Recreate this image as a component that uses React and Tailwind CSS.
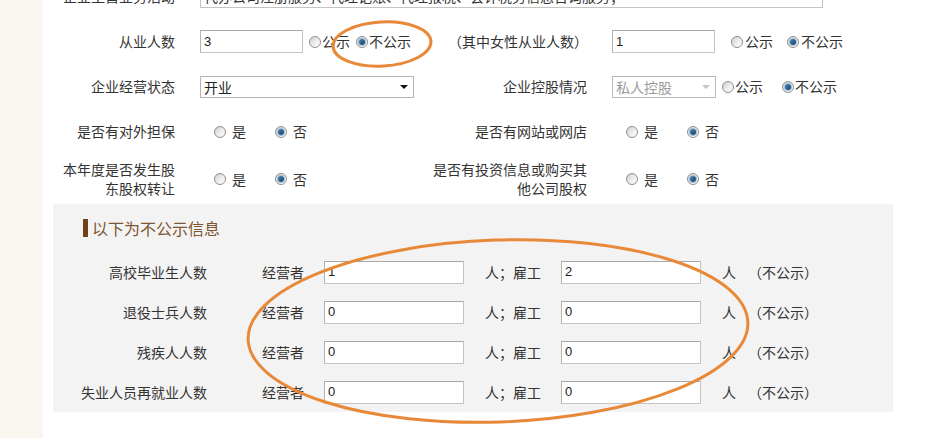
import React from "react";

const FONT = "font-['Noto_Sans_CJK_SC','Noto_Sans',sans-serif]";

const Radio = ({ checked }) => (
  <span className="inline-flex items-center justify-center w-[12px] h-[12px] shrink-0 rounded-full border border-[#8f8f8f] bg-gradient-to-br from-[#cfcfcf] via-[#ececec] to-[#ffffff]">
    {checked && (
      <span className="block w-[6px] h-[6px] rounded-full bg-gradient-to-br from-[#4d86b8] to-[#123f68] shadow-[0_0_0_1px_#9fc0dc]" />
    )}
  </span>
);

const Opt = ({ checked, label, gap = "ml-[1px]", className = "" }) => (
  <span className={`inline-flex items-center ${className}`}>
    <Radio checked={checked} />
    <span className={gap}>{label}</span>
  </span>
);

const TextBox = ({ value, w, h = "h-[23px]" }) => (
  <div
    className={`${w} ${h} shrink-0 flex items-center bg-white border border-[#c4c4c4] border-t-[#a8a8a8] border-l-[#b4b4b4] px-[3px] text-[13px] font-['Liberation_Sans',sans-serif] text-[#222]`}
  >
    {value}
  </div>
);

const Select = ({ value, w, disabled }) => (
  <div
    className={`${w} h-[22px] shrink-0 flex items-center justify-between border ${
      disabled ? "border-[#b9b9b9] text-[#9a9a9a]" : "border-[#b4b4b4] text-[#222]"
    } bg-white pl-[3px] pr-[5px] text-[14px] leading-none`}
  >
    <span>{value}</span>
    <span
      className={`block w-0 h-0 border-l-[4px] border-r-[4px] border-t-[4px] border-l-transparent border-r-transparent ${
        disabled ? "border-t-[#c4c4c4]" : "border-t-[#111]"
      }`}
    />
  </div>
);

const Row = ({ h, left, leftLabel, right, rightLabel }) => (
  <div className={`flex items-center ${h}`}>
    <div className="w-[387px] shrink-0 flex items-center">
      <div className="w-[132px] shrink-0 text-right leading-[19px]">{leftLabel}</div>
      <div className="ml-[25px] flex items-center">{left}</div>
    </div>
    {rightLabel !== undefined && (
      <div className="flex items-center">
        <div className="w-[157px] shrink-0 text-right leading-[19px]">{rightLabel}</div>
        <div className="ml-[25px] flex items-center">{right}</div>
      </div>
    )}
  </div>
);

const HiddenRow = ({ label, a, b }) => (
  <div className="flex items-center h-[40px]">
    <div className="w-[154px] shrink-0 text-right">{label}</div>
    <div className="ml-[55px] w-[62px] shrink-0">经营者</div>
    <TextBox value={a} w="w-[140px]" />
    <div className="w-[97px] shrink-0 pl-[21px]">人；雇工</div>
    <TextBox value={b} w="w-[140px]" />
    <div className="w-[47px] shrink-0 pl-[21px]">人</div>
    <div>（不公示）</div>
  </div>
);

export default function App() {
  return (
    <div className={`relative flex w-[948px] h-[438px] overflow-hidden bg-white text-[14px] text-[#333] ${FONT}`}>
      <div className="w-[43px] shrink-0 bg-[#f8f6ee]" />

      <div className="flex-1">
        <div className="-mt-[27px]">
          <Row
            h="h-[46px]"
            leftLabel="企业主营业务活动"
            left={
              <div className="w-[623px] h-[23px] flex items-center border border-[#c4c4c4] bg-white px-[3px] whitespace-nowrap overflow-hidden">
                代办公司注册服务、代理记账、代理报税、会计税务信息咨询服务；
              </div>
            }
          />
          <Row
            h="h-[45px]"
            leftLabel="从业人数"
            left={
              <>
                <TextBox value="3" w="w-[103px]" />
                <Opt className="ml-[6px]" label="公示" />
                <Opt className="ml-[6px]" checked label="不公示" />
              </>
            }
            rightLabel={<span className="relative left-[1px]">（其中女性从业人数）</span>}
            right={
              <>
                <TextBox value="1" w="w-[103px]" />
                <Opt className="ml-[16px]" gap="ml-[2px]" label="公示" />
                <Opt className="ml-[14px]" gap="ml-[2px]" checked label="不公示" />
              </>
            }
          />
          <Row
            h="h-[45px]"
            leftLabel="企业经营状态"
            left={<Select value="开业" w="w-[214px]" />}
            rightLabel="企业控股情况"
            right={
              <>
                <Select value="私人控股" w="w-[104px]" disabled />
                <Opt className="ml-[6px]" label="公示" />
                <Opt className="ml-[19px]" checked label="不公示" />
              </>
            }
          />
          <Row
            h="h-[45px]"
            leftLabel="是否有对外担保"
            left={
              <>
                <Opt className="ml-[14px]" gap="ml-[6px]" label="是" />
                <Opt className="ml-[29px]" gap="ml-[6px]" checked label="否" />
              </>
            }
            rightLabel="是否有网站或网店"
            right={
              <>
                <Opt className="ml-[14px]" gap="ml-[6px]" label="是" />
                <Opt className="ml-[29px]" gap="ml-[6px]" checked label="否" />
              </>
            }
          />
          <Row
            h="h-[50px]"
            leftLabel={
              <>
                本年度是否发生股
                <br />
                东股权转让
              </>
            }
            left={
              <>
                <Opt className="ml-[14px]" gap="ml-[6px]" label="是" />
                <Opt className="ml-[29px]" gap="ml-[6px]" checked label="否" />
              </>
            }
            rightLabel={
              <>
                是否有投资信息或购买其
                <br />
                他公司股权
              </>
            }
            right={
              <>
                <Opt className="ml-[14px]" gap="ml-[6px]" label="是" />
                <Opt className="ml-[29px]" gap="ml-[6px]" checked label="否" />
              </>
            }
          />
        </div>

        <div className="ml-[10px] w-[840px] h-[208px] bg-[#f3f3f3]">
          <div className="h-[48px] flex items-center pl-[30px]">
            <span className="block w-[5px] h-[18px] bg-[#6e4214]" />
            <span className="ml-[4px] text-[16px] text-[#7e5530] leading-none">以下为不公示信息</span>
          </div>
          <HiddenRow label="高校毕业生人数" a="1" b="2" />
          <HiddenRow label="退役士兵人数" a="0" b="0" />
          <HiddenRow label="残疾人人数" a="0" b="0" />
          <HiddenRow label="失业人员再就业人数" a="0" b="0" />
        </div>
      </div>

      <svg className="absolute inset-0 pointer-events-none" width="948" height="438" viewBox="0 0 948 438">
        <ellipse cx="382" cy="44" rx="49" ry="22" fill="none" stroke="#e8893a" strokeWidth="3" transform="rotate(-3 382 44)" />
        <ellipse cx="498" cy="331" rx="250" ry="91" fill="none" stroke="#e8893a" strokeWidth="3" transform="rotate(-2 498 331)" />
      </svg>
    </div>
  );
}
